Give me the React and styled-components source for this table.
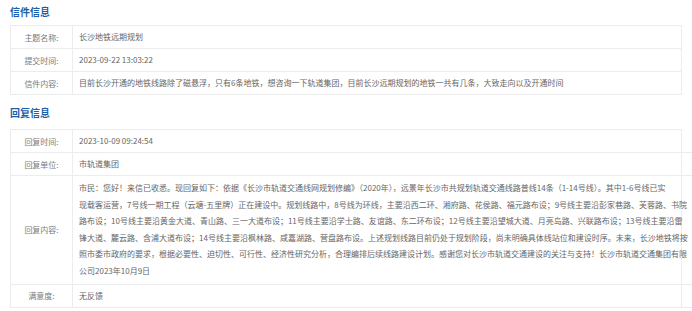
import { Fragment } from 'react'
import styled, { createGlobalStyle } from 'styled-components'

//Global styles
const GlobalStyle = createGlobalStyle`
    html, body {
        margin: 0;
        padding: 0;
        background: #ffffff;
    }
    body {
        font-family: "Noto Sans CJK SC", "Noto Sans", "Liberation Sans", sans-serif;
    }
`

//Styled components declarations
const Page = styled.div`
    width: 692px;
    padding: 4px 10px 0 10px;
    box-sizing: border-box;
`

const SectionTitle = styled.h2`
    margin: ${({ $first }) => ($first ? '0 0 5px 0' : '10px 0 8px 0')};
    font-size: 10px;
    line-height: 16px;
    font-weight: 700;
    color: #1b5fa9;
`

const InfoTable = styled.div`
    display: grid;
    grid-template-columns: 62px 1fr;
    border: 1px solid #ececec;
    border-bottom: none;
`

const LabelCell = styled.div`
    display: flex;
    align-items: center;
    justify-content: center;
    border-right: 1px solid #ececec;
    border-bottom: 1px solid #ececec;
    min-height: 22px;
    font-size: 8px;
    color: #7a7a7a;
`

const ValueCell = styled.div`
    display: flex;
    align-items: center;
    padding: ${({ $multi }) => ($multi ? '4px 6px' : '0 6px')};
    border-bottom: 1px solid #ececec;
    min-height: 22px;
    font-size: 8px;
    line-height: ${({ $multi }) => ($multi ? '16.6px' : '12px')};
    color: #666666;
    white-space: nowrap;
`

const letterRows = [
    { label: '主题名称:', value: '长沙地铁远期规划' },
    { label: '提交时间:', value: '2023-09-22 13:03:22' },
    {
        label: '信件内容:',
        value: '目前长沙开通的地铁线路除了磁悬浮，只有6条地铁，想咨询一下轨道集团，目前长沙远期规划的地铁一共有几条，大致走向以及开通时间',
    },
]

const replyLines = [
    '市民：您好！来信已收悉。现回复如下：依据《长沙市轨道交通线网规划修编》（2020年），远景年长沙市共规划轨道交通线路普线14条（1-14号线）。其中1-6号线已实',
    '现载客运营，7号线一期工程（云塘-五里牌）正在建设中。规划线路中，8号线为环线，主要沿西二环、湘府路、花侯路、福元路布设；9号线主要沿彭家巷路、芙蓉路、书院',
    '路布设；10号线主要沿黄金大道、青山路、三一大道布设；11号线主要沿学士路、友谊路、东二环布设；12号线主要沿望城大道、月亮岛路、兴联路布设；13号线主要沿雷',
    '锋大道、麓云路、含浦大道布设；14号线主要沿枫林路、咸嘉湖路、营盘路布设。上述规划线路目前仍处于规划阶段，尚未明确具体线站位和建设时序。未来，长沙地铁将按',
    '照市委市政府的要求，根据必要性、迫切性、可行性、经济性研究分析，合理编排后续线路建设计划。感谢您对长沙市轨道交通建设的关注与支持！长沙市轨道交通集团有限',
    '公司2023年10月9日',
]

const App = () => {
    return (
        <Page>
            <GlobalStyle />
            <SectionTitle $first>信件信息</SectionTitle>
            <InfoTable>
                {letterRows.map((row) => (
                    <Fragment key={row.label}>
                        <LabelCell>{row.label}</LabelCell>
                        <ValueCell>{row.value}</ValueCell>
                    </Fragment>
                ))}
            </InfoTable>

            <SectionTitle>回复信息</SectionTitle>
            <InfoTable>
                <LabelCell>回复时间:</LabelCell>
                <ValueCell>2023-10-09 09:24:54</ValueCell>
                <LabelCell>回复单位:</LabelCell>
                <ValueCell>市轨道集团</ValueCell>
                <LabelCell>回复内容:</LabelCell>
                <ValueCell $multi>
                    <div>
                        {replyLines.map((line, i) => (
                            <div key={i}>{line}</div>
                        ))}
                    </div>
                </ValueCell>
                <LabelCell>满意度:</LabelCell>
                <ValueCell>无反馈</ValueCell>
            </InfoTable>
        </Page>
    )
}

export default App
